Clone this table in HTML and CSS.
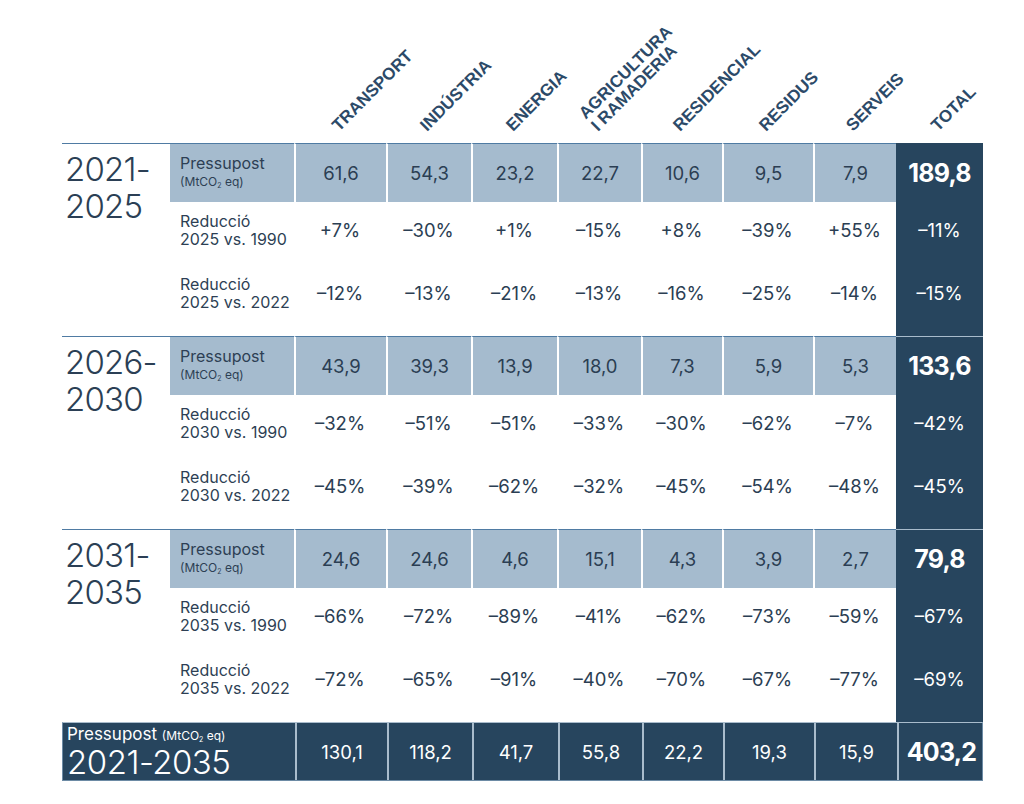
FILE: index.html
```html
<!DOCTYPE html>
<html lang="ca">
<head>
<meta charset="utf-8">
<title>Pressupostos de carboni</title>
<link rel="stylesheet" href="styles.css">
</head>
<body>
<div class="page">
  <div class="heads">
    <div class="hcell"></div>
    <div class="hcell"></div>
    <div class="hcell"><div class="anchor"><span class="rot">TRANSPORT</span></div></div>
    <div class="hcell"><div class="anchor"><span class="rot">INDÚSTRIA</span></div></div>
    <div class="hcell"><div class="anchor"><span class="rot">ENERGIA</span></div></div>
    <div class="hcell"><div class="anchor"><span class="rot">AGRICULTURA<br>I RAMADERIA</span></div></div>
    <div class="hcell"><div class="anchor"><span class="rot">RESIDENCIAL</span></div></div>
    <div class="hcell"><div class="anchor"><span class="rot">RESIDUS</span></div></div>
    <div class="hcell"><div class="anchor"><span class="rot">SERVEIS</span></div></div>
    <div class="hcell"><div class="anchor"><span class="rot">TOTAL</span></div></div>
  </div>

  <section class="block">
    <div class="year">2021-<br>2025</div>
    <div class="lbl p top">Pressupost<small>(MtCO<sub>2</sub> eq)</small></div>
    <div class="v p top sep">61,6</div><div class="v p top sep">54,3</div><div class="v p top sep">23,2</div><div class="v p top sep">22,7</div><div class="v p top sep">10,6</div><div class="v p top sep">9,5</div><div class="v p top sep">7,9</div>
    <div class="v t big">189,8</div>
    <div class="lbl mid">Reducció<br>2025 vs. 1990</div>
    <div class="v mid">+7%</div><div class="v mid">–30%</div><div class="v mid">+1%</div><div class="v mid">–15%</div><div class="v mid">+8%</div><div class="v mid">–39%</div><div class="v mid">+55%</div>
    <div class="v t mid">–11%</div>
    <div class="lbl last">Reducció<br>2025 vs. 2022</div>
    <div class="v last">–12%</div><div class="v last">–13%</div><div class="v last">–21%</div><div class="v last">–13%</div><div class="v last">–16%</div><div class="v last">–25%</div><div class="v last">–14%</div>
    <div class="v t last">–15%</div>
  </section>

  <section class="block">
    <div class="year">2026-<br>2030</div>
    <div class="lbl p top">Pressupost<small>(MtCO<sub>2</sub> eq)</small></div>
    <div class="v p top sep">43,9</div><div class="v p top sep">39,3</div><div class="v p top sep">13,9</div><div class="v p top sep">18,0</div><div class="v p top sep">7,3</div><div class="v p top sep">5,9</div><div class="v p top sep">5,3</div>
    <div class="v t big ttop">133,6</div>
    <div class="lbl mid">Reducció<br>2030 vs. 1990</div>
    <div class="v mid">–32%</div><div class="v mid">–51%</div><div class="v mid">–51%</div><div class="v mid">–33%</div><div class="v mid">–30%</div><div class="v mid">–62%</div><div class="v mid">–7%</div>
    <div class="v t mid">–42%</div>
    <div class="lbl last">Reducció<br>2030 vs. 2022</div>
    <div class="v last">–45%</div><div class="v last">–39%</div><div class="v last">–62%</div><div class="v last">–32%</div><div class="v last">–45%</div><div class="v last">–54%</div><div class="v last">–48%</div>
    <div class="v t last">–45%</div>
  </section>

  <section class="block">
    <div class="year">2031-<br>2035</div>
    <div class="lbl p top">Pressupost<small>(MtCO<sub>2</sub> eq)</small></div>
    <div class="v p top sep">24,6</div><div class="v p top sep">24,6</div><div class="v p top sep">4,6</div><div class="v p top sep">15,1</div><div class="v p top sep">4,3</div><div class="v p top sep">3,9</div><div class="v p top sep">2,7</div>
    <div class="v t big ttop">79,8</div>
    <div class="lbl mid">Reducció<br>2035 vs. 1990</div>
    <div class="v mid">–66%</div><div class="v mid">–72%</div><div class="v mid">–89%</div><div class="v mid">–41%</div><div class="v mid">–62%</div><div class="v mid">–73%</div><div class="v mid">–59%</div>
    <div class="v t mid">–67%</div>
    <div class="lbl last">Reducció<br>2035 vs. 2022</div>
    <div class="v last">–72%</div><div class="v last">–65%</div><div class="v last">–91%</div><div class="v last">–40%</div><div class="v last">–70%</div><div class="v last">–67%</div><div class="v last">–77%</div>
    <div class="v t last">–69%</div>
  </section>

  <div class="sum">
    <div class="sumlbl"><span class="sumtop">Pressupost <small>(MtCO<sub>2</sub> eq)</small></span><span class="sumyear">2021-2035</span></div>
    <div class="sv">130,1</div><div class="sv">118,2</div><div class="sv">41,7</div><div class="sv">55,8</div><div class="sv">22,2</div><div class="sv">19,3</div><div class="sv">15,9</div>
    <div class="sv big">403,2</div>
  </div>
</div>
</body>
</html>
```

FILE: styles.css
```css
* { box-sizing: border-box; }

body {
  margin: 0;
  background: #ffffff;
  font-family: Inter, "Noto Sans", "Liberation Sans", sans-serif;
  color: #2b3e53;
}

.page {
  --cols: 108px 124px 92px 85px 86px 84px 81px 91px 83px 87px;
  --light: #a5bbce;
  --dark: #27455e;
  --line: #4f7ba3;
  padding-left: 62px;
  width: 1024px;
}

/* rotated column headers */
.heads {
  display: grid;
  grid-template-columns: var(--cols);
  width: 921px;
  height: 143px;
}

.hcell {
  display: flex;
  justify-content: center;
  align-items: flex-end;
  padding-bottom: 8px;
}

.anchor {
  width: 0;
  margin-left: 1px;
}

.rot {
  display: inline-block;
  white-space: nowrap;
  font-family: "Liberation Sans", Arial, sans-serif;
  font-weight: 700;
  font-size: 17px;
  line-height: 17px;
  color: #2c4a68;
  transform-origin: 0 100%;
  transform: rotate(-45deg);
}

/* period blocks */
.block {
  display: grid;
  grid-template-columns: var(--cols);
  grid-template-rows: 59px 63px 71px;
  width: 921px;
}

.year {
  grid-row: 1 / 4;
  grid-column: 1;
  border-top: 1px solid var(--line);
  padding: 7px 0 0 3px;
  font-size: 33px;
  font-weight: 300;
  line-height: 37px;
  letter-spacing: -0.8px;
  color: #2b3f55;
}

.lbl {
  display: flex;
  flex-direction: column;
  justify-content: center;
  padding-left: 10px;
  font-size: 16px;
  line-height: 18px;
  color: #2d3f54;
}

.lbl.p { padding-bottom: 2px; }

.lbl small {
  font-size: 12px;
  line-height: 19px;
}

sub {
  font-size: 7px;
  vertical-align: -2px;
  line-height: 0;
}

.v {
  display: flex;
  align-items: center;
  justify-content: center;
  font-size: 18.5px;
  color: #2b3e53;
}

.p { background: var(--light); }

.top { border-top: 1px solid var(--line); }

.sep { border-left: 2px solid #ffffff; }

.mid { padding-bottom: 8px; }

.last { padding-bottom: 16px; }

.t {
  grid-column: 10;
  background: var(--dark);
  color: #ffffff;
}

.ttop { border-top: 1px solid #a9bccc; }

.big {
  font-size: 25px;
  font-weight: 700;
  letter-spacing: -0.8px;
}

/* overall total row */
.sum {
  display: grid;
  grid-template-columns: 232px 92px 85px 86px 84px 81px 91px 83px 87px;
  height: 59px;
  width: 921px;
  background: var(--dark);
  border: 1px solid #6d8ba5;
  border-top-color: #a9bccc;
  color: #ffffff;
}

.sumlbl {
  display: flex;
  flex-direction: column;
  padding: 2px 0 0 4px;
}

.sumtop {
  font-size: 17px;
  line-height: 19px;
}

.sumtop small { font-size: 12px; }

.sumyear {
  font-size: 33px;
  font-weight: 300;
  line-height: 34px;
  letter-spacing: -0.5px;
}

.sv {
  display: flex;
  align-items: center;
  justify-content: center;
  font-size: 18.5px;
  border-left: 2px solid #a9bccc;
}

.sv.big { font-size: 25px; }
```
